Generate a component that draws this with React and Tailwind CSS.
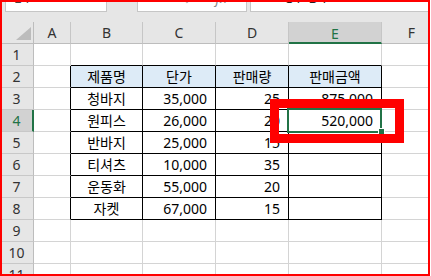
const FONT = "font-['Noto_Sans','Noto_Sans_CJK_KR',sans-serif]";

const COLS = ['A', 'B', 'C', 'D', 'E', 'F'];

const DATA = {
  2: ['제품명', '단가', '판매량', '판매금액'],
  3: ['청바지', '35,000', '25', '875,000'],
  4: ['원피스', '26,000', '20', '520,000'],
  5: ['반바지', '25,000', '15', ''],
  6: ['티셔츠', '10,000', '35', ''],
  7: ['운동화', '55,000', '20', ''],
  8: ['자켓', '67,000', '15', ''],
};

function FormulaStrip() {
  return (
    <div className="flex h-[22px] items-start bg-[#e6e6e6]">
      {/* Name box, cut off at the top */}
      <div className="ml-[5px] h-[12px] w-[102px] overflow-hidden border-x border-b border-[#c6c6c6] bg-white">
        <div className="-mt-[12px] pl-[8px] text-[14px] leading-[20px] text-[#444]">E4</div>
      </div>
      <div className="flex w-[30px] justify-center">
        <div className="ml-[1px] h-[2px] w-[2px] bg-[#9a9a9a]" />
      </div>
      <div className="flex h-[12px] w-[110px] gap-[22px] overflow-hidden border-x border-b border-[#c6c6c6] bg-white pl-[12px]">
        <span className="-mt-[12px] text-[14px] leading-[20px] text-[#b0b0b0]">✕</span>
        <span className="-mt-[12px] text-[14px] leading-[20px] text-[#b0b0b0]">✓</span>
        <span className="-mt-[12px] text-[14px] italic leading-[20px] text-[#8a8a8a]">fx</span>
      </div>
      {/* Formula input */}
      <div className="ml-[3px] h-[12px] flex-1 overflow-hidden border-l border-b border-[#c6c6c6] bg-white pl-[25px]">
        <div className="-mt-[12px] text-[14px] leading-[20px] text-[#222]">=C4*D4</div>
      </div>
    </div>
  );
}

// c: 0 = A, 1 = B ... 5 = F
function Cell({ r, c }) {
  const inTable = r >= 2 && r <= 8 && c >= 1 && c <= 4;
  const rightBlack = inTable || (c === 0 && r >= 2 && r <= 8);
  const bottomBlack = inTable || (r === 1 && c >= 1 && c <= 4);
  const text = inTable ? DATA[r][c - 1] : '';
  const centered = r === 2 || c === 1;

  return (
    <div
      className={[
        'flex items-center border-r border-b text-[14px] text-black',
        rightBlack ? 'border-r-black' : 'border-r-[#d4d4d4]',
        bottomBlack ? 'border-b-black' : 'border-b-[#d4d4d4]',
        r === 2 && inTable ? 'bg-[#ddebf7]' : 'bg-white',
        centered ? 'justify-center' : 'justify-end pr-[8px]',
      ].join(' ')}
    >
      {text}
    </div>
  );
}

function Sheet() {
  const rows = Array.from({ length: 11 }, (_, i) => i + 1);

  return (
    <div className="grid grid-cols-[34px_37px_72px_73px_73px_93px_60px] auto-rows-[22px]">
      {/* Select-all corner */}
      <div className="border-r border-b border-[#bdbdbd] bg-[#e6e6e6]">
        <svg width="33" height="21" viewBox="0 0 33 21">
          <polygon points="31,5 31,18 16,18" fill="#bcbcbc" />
        </svg>
      </div>
      {COLS.map((col) =>
        col === 'E' ? (
          <div
            key={col}
            className="flex items-center justify-center border-r border-b-2 border-r-[#c6c6c6] border-b-[#217346] bg-[#d2d2d2] pt-[2px] text-[14px] text-[#217346]"
          >
            {col}
          </div>
        ) : (
          <div
            key={col}
            className="flex items-center justify-center border-r border-b border-r-[#c6c6c6] border-b-[#bdbdbd] bg-[#e6e6e6] text-[14px] text-[#333]"
          >
            {col}
          </div>
        )
      )}

      {rows.map((r) => [
        r === 4 ? (
          <div
            key={`h${r}`}
            className="flex items-center justify-center border-r-2 border-b border-r-[#217346] border-b-[#c8c8c8] bg-[#d2d2d2] pl-[1px] text-[14px] text-[#217346]"
          >
            {r}
          </div>
        ) : (
          <div
            key={`h${r}`}
            className="flex items-center justify-center border-r border-b border-r-[#bdbdbd] border-b-[#c8c8c8] bg-[#e6e6e6] text-[14px] text-[#333]"
          >
            {r}
          </div>
        ),
        ...COLS.map((_, c) => <Cell key={`${r}-${c}`} r={r} c={c} />),
      ])}
    </div>
  );
}

export default function App() {
  return (
    <div className={`relative h-[276px] w-[431px] overflow-hidden bg-white ${FONT}`}>
      <div className="h-[276px] w-[430px] overflow-hidden">
        <FormulaStrip />
        <Sheet />
      </div>

      {/* Active cell E4 */}
      <div className="pointer-events-none absolute left-[287px] top-[108px] h-[25px] w-[95px] border-2 border-[#217346]" />
      <div className="pointer-events-none absolute left-[378px] top-[128px] h-[7px] w-[7px] border border-white bg-[#217346]" />

      {/* Red highlight box */}
      <div className="pointer-events-none absolute left-[270px] top-[99px] h-[44px] w-[134px] border-[9px] border-[#ff0000]" />

      {/* Red frame */}
      <div className="pointer-events-none absolute left-0 top-0 h-[276px] w-[430px] border-2 border-[#ff0000]" />
    </div>
  );
}
